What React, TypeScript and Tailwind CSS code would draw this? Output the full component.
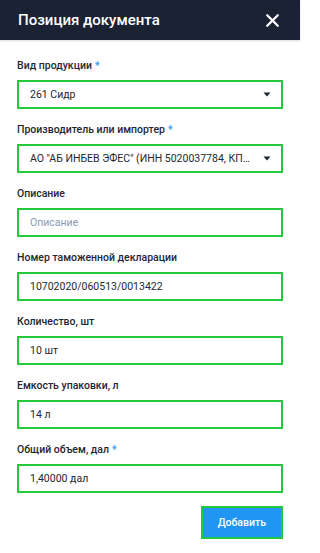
import { X } from 'lucide-react'

type Field = {
  label: string
  value?: string
  placeholder?: string
  required?: boolean
  select?: boolean
}

const fields: Field[] = [
  { label: 'Вид продукции', value: '261 Сидр', required: true, select: true },
  {
    label: 'Производитель или импортер',
    value: 'АО "АБ ИНБЕВ ЭФЕС" (ИНН 5020037784, КПП 502001001)',
    required: true,
    select: true,
  },
  { label: 'Описание', placeholder: 'Описание' },
  { label: 'Номер таможенной декларации', value: '10702020/060513/0013422' },
  { label: 'Количество, шт', value: '10 шт' },
  { label: 'Емкость упаковки, л', value: '14 л' },
  { label: 'Общий объем, дал', value: '1,40000 дал', required: true },
]

function Caret() {
  return (
    <svg width="8" height="5" viewBox="0 0 8 5" className="shrink-0 text-[#1f2633]">
      <path d="M0.5 0.5h7L4 4.5z" fill="currentColor" />
    </svg>
  )
}

function FormField({ field }: { field: Field }) {
  return (
    <div className="mb-[12px]">
      <div className="mb-[5px] text-[10.5px] leading-[18px] font-medium text-[#1f2633]">
        {field.label}
        {field.required && <span className="ml-[3px] text-[#2196f3]">*</span>}
      </div>
      <div className="flex h-[29px] items-center gap-[11px] border-2 border-[#22c93a] bg-white pr-[10px] pl-[11px] text-[10.5px]">
        {field.value ? (
          <span className="min-w-0 flex-1 truncate text-[#222831]">{field.value}</span>
        ) : (
          <span className="min-w-0 flex-1 truncate text-[#8a9bb4]">{field.placeholder}</span>
        )}
        {field.select && <Caret />}
      </div>
    </div>
  )
}

export default function App() {
  return (
    <div className="h-[553px] w-[300px] bg-white font-['Roboto',sans-serif]">
      <header className="flex h-[40px] items-center justify-between bg-[#1b2234] pr-[17px] pl-[18px] shadow-[0_1px_2px_rgba(0,0,0,0.15)]">
        <h1 className="text-[15px] font-medium text-white">Позиция документа</h1>
        <X size={21} strokeWidth={2.7} className="text-white" />
      </header>
      <form className="px-[17px] pt-[17px]">
        {fields.map((f) => (
          <FormField key={f.label} field={f} />
        ))}
        <div className="flex justify-end pt-[1px]">
          <button
            type="button"
            className="h-[33px] border-2 border-[#22c93a] bg-[#1f97f2] px-[15px] text-[10.5px] font-medium text-white"
          >
            Добавить
          </button>
        </div>
      </form>
    </div>
  )
}
